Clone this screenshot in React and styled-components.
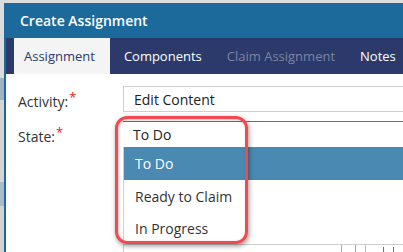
import React from "react";
import styled, { createGlobalStyle } from "styled-components";

const GlobalStyle = createGlobalStyle`
  html, body {
    margin: 0;
    padding: 0;
    overflow: hidden;
    background: #dcdcdc;
    font-family: "Open Sans", "Liberation Sans", sans-serif;
  }
`;

const Page = styled.div`
  height: 252px;
  padding: 3px 0 0 4px;
  box-sizing: border-box;
  background: linear-gradient(
    to bottom,
    #dcdcdc 0,
    #dcdcdc 78px,
    #9fb3c3 78px,
    #9fb3c3 100px,
    #d4d4d4 100px,
    #d4d4d4 182px,
    #a9bccb 182px,
    #a9bccb 206px,
    #d2d2d2 206px
  );
  background-size: 4px 100%;
  background-repeat: no-repeat;
`;

const Dialog = styled.div`
  width: 430px;
  height: 249px;
  background: #fff;
  border-left: 2px solid #1c6a9b;
  overflow: hidden;
`;

const Header = styled.div`
  height: 35px;
  background: #1c6a9b;
  display: flex;
  align-items: center;
  padding-left: 14px;
  color: #fff;
  font-size: 14px;
  font-weight: 600;
`;

const TabBar = styled.div`
  height: 36px;
  background: #2b3a6a;
  display: flex;
  gap: 3px;
  padding-left: 8px;
`;

const Tab = styled.div`
  display: flex;
  align-items: center;
  padding: 0 ${(p) => (p.$active ? 15 : 11)}px 0 ${(p) => (p.$active ? 10 : 11)}px;
  font-size: 13px;
  color: ${(p) => (p.$active ? "#2b3a6a" : p.$disabled ? "#7b84a4" : "#fff")};
  background: ${(p) => (p.$active ? "#f4f4f4" : "transparent")};
`;

const Body = styled.div`
  padding: 12px 0 0 12px;
  display: flex;
  flex-direction: column;
  gap: 9px;
`;

const Row = styled.div`
  display: grid;
  grid-template-columns: 105px 1fr;
  align-items: center;
`;

const Label = styled.div`
  font-size: 14px;
  color: #333;
`;

const Req = styled.span`
  color: #e8141b;
  font-size: 13px;
  vertical-align: 5px;
  margin-left: 1px;
`;

const Input = styled.div`
  height: 24px;
  border: 1px solid #cfcfcf;
  display: flex;
  align-items: center;
  padding-left: 10px;
  font-size: 14px;
  color: #222;
`;

const SelectWrap = styled.div`
  position: relative;
`;

const Select = styled.div`
  height: 25px;
  border-top: 1px solid #2f7fae;
  display: flex;
  align-items: center;
  padding-left: 10px;
  font-size: 14px;
  color: #222;
`;

const Menu = styled.div`
  position: absolute;
  top: 26px;
  left: 0;
  right: 0;
  background: #fff;
  border-left: 1px solid #d0d0d0;
  border-bottom: 1px solid #cfcfcf;
  z-index: 2;
`;

const Option = styled.div`
  height: ${(p) => (p.$selected ? 33 : 32)}px;
  display: flex;
  align-items: center;
  padding-left: 11px;
  font-size: 14px;
  color: ${(p) => (p.$selected ? "#fff" : "#333")};
  background: ${(p) => (p.$selected ? "#4a89b2" : "#fff")};
`;

const Callout = styled.div`
  position: absolute;
  left: -8px;
  top: -5px;
  width: 127px;
  height: 122px;
  border: 3px solid #f24a50;
  border-radius: 12px;
  box-shadow: 1px 2px 5px rgba(0, 0, 0, 0.4), inset 1px 1px 3px rgba(0, 0, 0, 0.25);
  z-index: 3;
  pointer-events: none;
`;

const Editor = styled.div`
  margin-top: 97px;
  margin-left: 117px;
  height: 20px;
  border-left: 1px solid #cfcfcf;
  display: flex;
  align-items: flex-start;
  padding: 1px 0 0 217px;
`;

const Sep = styled.span`
  width: 1px;
  height: 8px;
  margin-right: ${(p) => p.$gap}px;
  background: ${(p) => p.$color};
`;

const Tool = styled.span`
  width: 9px;
  height: 5px;
  margin-top: 2px;
  border: 1px solid #4a6fc8;
  border-top: none;
  border-radius: 0 0 2px 2px;
`;

export default function App() {
  return (
    <>
      <GlobalStyle />
      <Page>
        <Dialog>
          <Header>Create Assignment</Header>
          <TabBar>
            <Tab $active>Assignment</Tab>
            <Tab>Components</Tab>
            <Tab $disabled>Claim Assignment</Tab>
            <Tab>Notes</Tab>
          </TabBar>
          <Body>
            <Row>
              <Label>
                Activity:<Req>*</Req>
              </Label>
              <Input>Edit Content</Input>
            </Row>
            <Row>
              <Label>
                State:<Req>*</Req>
              </Label>
              <SelectWrap>
                <Select>To Do</Select>
                <Menu>
                  <Option $selected>To Do</Option>
                  <Option>Ready to Claim</Option>
                  <Option>In Progress</Option>
                </Menu>
                <Callout />
              </SelectWrap>
            </Row>
          </Body>
          <Editor>
            <Sep $color="#d9a066" $gap={13} />
            <Sep $color="#7fa3d8" $gap={9} />
            <Sep $color="#bbbbbb" $gap={17} />
            <Tool />
          </Editor>
        </Dialog>
      </Page>
    </>
  );
}
